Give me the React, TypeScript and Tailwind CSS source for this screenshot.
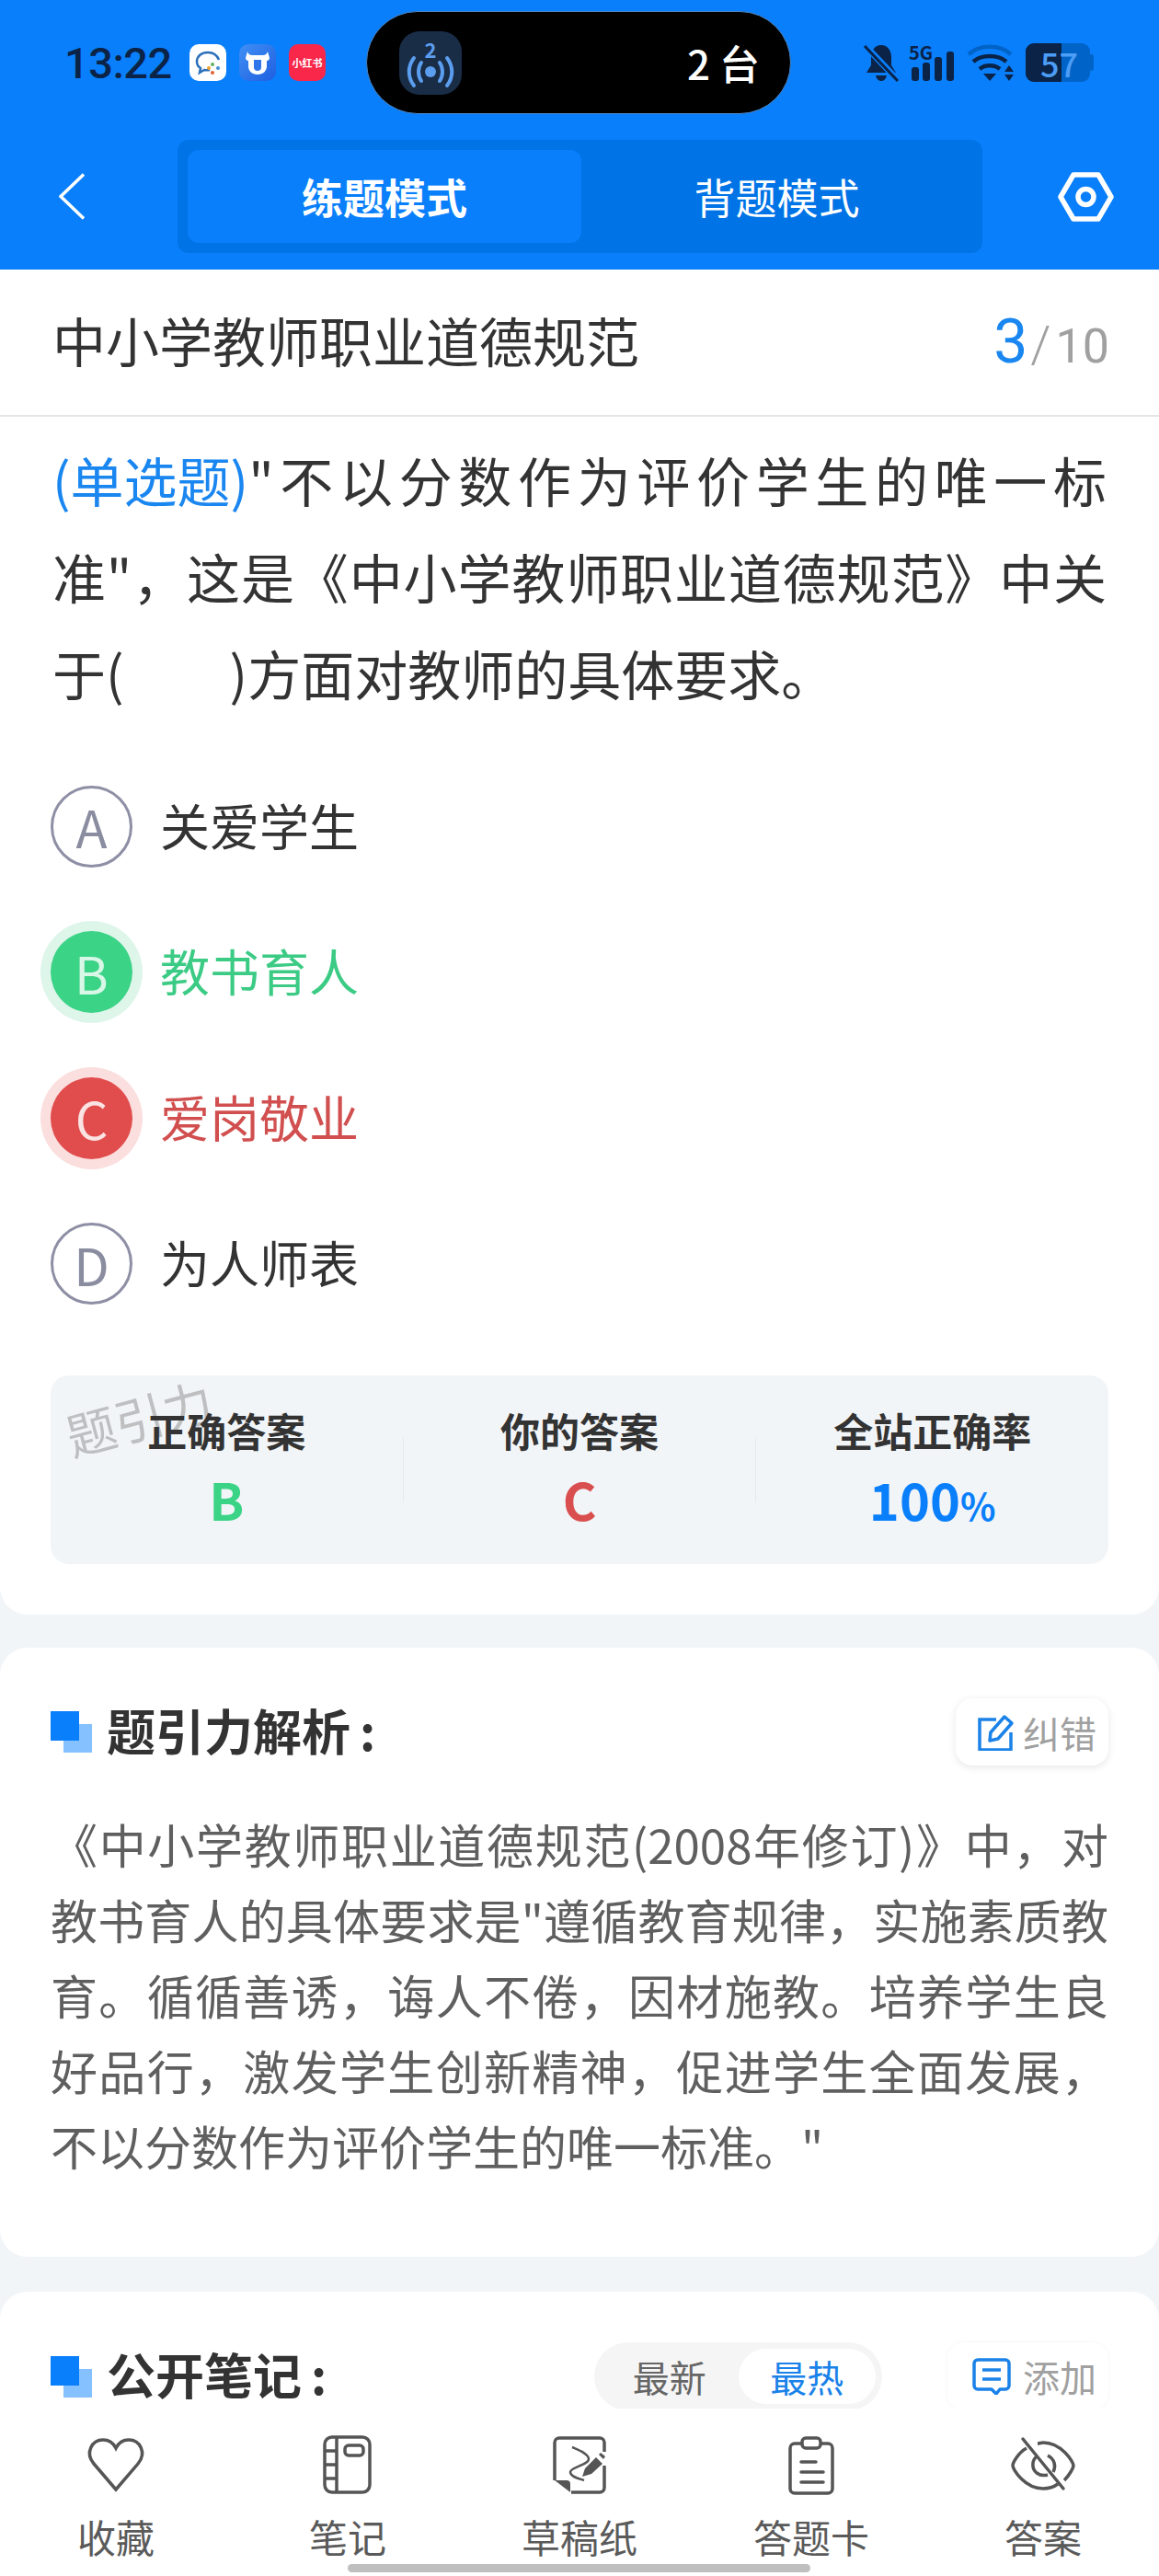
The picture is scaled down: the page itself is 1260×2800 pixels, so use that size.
const font = "font-['Noto_Sans_CJK_SC','Noto_Sans',sans-serif]";

function StatusBar() {
  return (
    <div className="flex h-[112px] mt-[12px] items-center">
      <span className="ml-[70px] w-[116px] text-[47px] leading-none font-medium tracking-[-0.5px] text-[#0a2347] font-['Roboto',sans-serif]">13:22</span>
      <div className="ml-[20px] flex gap-[14px]">
        <div className="w-[40px] h-[40px] rounded-[10px] bg-white">
          <svg viewBox="0 0 40 40" className="w-full h-full" fill="none">
            <path d="M20 9c-7 0-12 4-12 10 0 3 1.500 5.500 4 7l-1 5 5-3c2 .4 4 .4 6 0" stroke="#2a6fb8" strokeWidth="2.500" />
            <path d="M20 9c6 0 10 3 12 8" stroke="#2a6fb8" strokeWidth="2.500" />
            <circle cx="25" cy="22" r="2" fill="#63b060" />
            <circle cx="31" cy="26" r="2" fill="#3f8fd8" />
            <circle cx="25" cy="31" r="2" fill="#e06030" />
            <circle cx="21" cy="26" r="2" fill="#f0a030" />
          </svg>
        </div>
        <div className="w-[40px] h-[40px] rounded-[10px] bg-[linear-gradient(135deg,#3f8ff5,#1f5fe0)]">
          <svg viewBox="0 0 40 40" className="w-full h-full" fill="none">
            <path d="M9 8c1 3 3 4 5 4h12c2 0 4-1 5-4l2 7c0 1-1 3-3 3v6c0 5-4 9-10 9s-10-4-10-9v-6c-2 0-3-2-3-3z" fill="#fff" />
            <path d="M16 17h8v8c0 2.500-1.500 4-4 4s-4-1.500-4-4z" fill="#2f76ea" />
          </svg>
        </div>
        <div className="w-[40px] h-[40px] rounded-[10px] bg-[#f9274a] flex items-center justify-center">
          <span className="text-[11px] leading-none font-bold text-white whitespace-nowrap">小红书</span>
        </div>
      </div>
      <div className="ml-[44px] w-[462px] h-[112px] rounded-[56px] bg-black border border-[#4d86c4] flex items-center pl-[35px]">
        <div className="relative w-[68px] h-[69px] rounded-[22px] bg-[#1a2d47]">
          <span className="absolute top-[8px] left-0 right-0 text-center text-[22px] leading-none font-bold text-[#5b9dee]">2</span>
          <svg viewBox="0 0 68 69" className="w-full h-full" fill="none" stroke="#5b9dee" strokeWidth="4" strokeLinecap="round">
            <circle cx="34" cy="44" r="6" fill="#5b9dee" stroke="none" />
            <path d="M24 34c-4 6-4 14 0 20M44 34c4 6 4 14 0 20" />
            <path d="M16 29c-7 9-7 21 0 30M52 29c7 9 7 21 0 30" />
          </svg>
        </div>
        <span className="ml-[245px] text-[44px] leading-none font-medium text-white whitespace-nowrap">2 台</span>
      </div>
      <div className="ml-[78px] flex items-center">
        <svg viewBox="0 0 40 42" className="w-[40px] h-[42px]">
          <path d="M20 2c7 0 11 6 11 13v9l5 8H4l5-8v-9C9 8 13 2 20 2zM14 35h12c-1 4-3 6-6 6s-5-2-6-6z" fill="#0a2347" />
          <path d="M2 2l36 38" stroke="#0a7ffb" strokeWidth="7" />
          <path d="M2 3l36 38" stroke="#0a2347" strokeWidth="3" />
        </svg>
        <div className="ml-[10px] relative w-[50px] h-[42px]">
          <span className="absolute left-0 top-0 text-[20px] leading-[20px] font-bold text-[#0a2347]">5G</span>
          <svg viewBox="0 0 50 42" className="w-full h-full" fill="#0a2347">
            <rect x="3" y="26" width="8" height="15" rx="3" />
            <rect x="15" y="21" width="8" height="20" rx="3" />
            <rect x="28" y="15" width="8" height="26" rx="3" />
            <rect x="41" y="9" width="8" height="32" rx="3" />
          </svg>
        </div>
        <svg viewBox="0 0 52 42" className="ml-[13px] w-[52px] h-[42px]" fill="none">
          <path d="M2 12c12-11 34-11 46 0" stroke="#0063c8" strokeWidth="4.500" />
          <path d="M7 20c9-8 27-8 36 0" stroke="#0a2347" strokeWidth="4.500" />
          <path d="M14 28c6-5 16-5 22 0" stroke="#0a2347" strokeWidth="4.500" />
          <path d="M18 33h14l-7 8zM46 24l5 7H41zM46 41l-5-7h10z" fill="#0a2347" />
        </svg>
        <div className="ml-[12px] relative w-[74px] h-[42px]">
          <div className="flex w-[70px] h-[42px] rounded-[9px] overflow-hidden bg-[#0063c8]">
            <div className="w-[39px] bg-[#0a2347]" />
          </div>
          <div className="absolute right-0 top-[12px] w-[4px] h-[18px] rounded-r-[3px] bg-[#0063c8]" />
          <span className="absolute left-[16px] top-[3px] text-[36px] leading-[36px] font-medium text-[#4c9df5]">57</span>
        </div>
      </div>
    </div>
  );
}

function NavBar() {
  return (
    <div className="flex h-[123px] mt-[28px] mb-[18px] items-center pl-[64px]">
      <svg viewBox="0 0 28 51" className="w-[28px] h-[51px]" fill="none" stroke="#fff" strokeWidth="3.500">
        <path d="M27 1.500L2 25.500l25 24" />
      </svg>
      <div className="ml-[101px] w-[875px] h-[123px] rounded-[12px] bg-[#0073e6] p-[11px] flex">
        <div className="w-[428px] rounded-[12px] bg-[#0a7ffb] flex items-center justify-center text-[45px] leading-none font-bold text-white">练题模式</div>
        <div className="flex-1 flex items-center justify-center text-[45px] leading-none text-white">背题模式</div>
      </div>
      <svg viewBox="0 0 61 54" className="ml-[82px] w-[61px] h-[54px]" fill="none" stroke="#fff" strokeWidth="5.500">
        <path d="M17 3h27l14 24-14 24H17L3 27z" strokeLinejoin="round" />
        <circle cx="30.500" cy="27" r="8.500" />
      </svg>
    </div>
  );
}

function Option({ letter, text, state }: { letter: string; text: string; state?: "right" | "wrong" }) {
  return (
    <div className="flex h-[158.500px] items-center pl-[55px]">
      {state === "right" && (
        <div className="w-[89px] h-[89px] rounded-full bg-[#3bd386] ring-[11px] ring-[#def5ea] flex items-center justify-center text-[56px] text-[#d8f7e7]">{letter}</div>
      )}
      {state === "wrong" && (
        <div className="w-[89px] h-[89px] rounded-full bg-[#e14d4d] ring-[11px] ring-[#fbdede] flex items-center justify-center text-[56px] text-[#fbe3e3]">{letter}</div>
      )}
      {!state && (
        <div className="w-[89px] h-[89px] rounded-full border-[3px] border-[#8e8fa5] flex items-center justify-center text-[56px] text-[#8a8ca0]">{letter}</div>
      )}
      <span className={`ml-[30px] mb-[3px] text-[54px] leading-none ${state === "right" ? "text-[#3ccb85]" : state === "wrong" ? "text-[#d14f4f]" : "text-[#333]"}`}>{text}</span>
    </div>
  );
}

function Stat({ label, children }: { label: string; children: React.ReactNode }) {
  return (
    <div className="flex-1 flex flex-col items-center pt-[34px]">
      <span className="relative text-[43px] leading-[50px] font-bold text-[#333]">{label}</span>
      <div className="mt-[20px] h-[60px] flex items-baseline justify-center font-bold text-[56px] leading-[60px]">{children}</div>
    </div>
  );
}

function Heading({ title }: { title: string }) {
  return (
    <div className="flex items-center">
      <div className="relative w-[45px] h-[45px]">
        <div className="absolute left-[14px] top-[14px] w-[31px] h-[31px] bg-[#85c0ff]" />
        <div className="absolute left-0 top-0 w-[31px] h-[32px] bg-[#0a7ffb]" />
      </div>
      <span className="ml-[16px] mb-[6px] text-[53px] leading-[60px] font-bold text-[#333]">
        {title}
        <span className="ml-[10px]">:</span>
      </span>
    </div>
  );
}

const analysis = [
  "《中小学教师职业道德规范(2008年修订)》中，对",
  "教书育人的具体要求是\"遵循教育规律，实施素质教",
  "育。循循善诱，诲人不倦，因材施教。培养学生良",
  "好品行，激发学生创新精神，促进学生全面发展，",
];

function BottomBar() {
  const items = [
    {
      label: "收藏",
      icon: <path d="M35 59L11 31C1 19 9 5 21 5c6 0 11 3 14 9 3-6 8-9 14-9 12 0 20 14 10 26z" />,
    },
    {
      label: "笔记",
      icon: (
        <>
          <rect x="10" y="2" width="49" height="60" rx="8" />
          <path d="M23 2v60M10 17h13M10 32h13M10 47h13" />
          <rect x="32" y="11" width="20" height="11" rx="4" />
        </>
      ),
    },
    {
      label: "草稿纸",
      icon: (
        <>
          <path d="M62 18V8a5 5 0 0 0-5-5H13a5 5 0 0 0-5 5v41M62 33v24a5 5 0 0 1-5 5H26" />
          <path d="M27 13c7 3 18 7 18 13 0 6-20 9-20 14 0 5 9 7 15 9" strokeWidth="2.500" />
          <path d="M8 49h13a4 4 0 0 1 4 4v9z" fill="#555" stroke="none" />
          <path d="M38 45l3-9 12-12 7 7-12 11zM56 21l2-2 5 4-2 3z" fill="#555" stroke="none" />
        </>
      ),
    },
    {
      label: "答题卡",
      icon: (
        <>
          <path d="M24 9h-7a5 5 0 0 0-5 5v44a5 5 0 0 0 5 5h36a5 5 0 0 0 5-5V14a5 5 0 0 0-5-5h-7" />
          <rect x="25" y="3" width="20" height="11" rx="4" />
          <path d="M24 29h16M24 40h24M24 51h24" strokeLinecap="round" />
        </>
      ),
    },
    {
      label: "答案",
      icon: (
        <>
          <path d="M17 14C8 19 2 30 2 33c0 4 13 25 33 25 7 0 12-2 16-5M29 9c2 0 4-1 6-1 20 0 33 21 33 25 0 2-4 10-10 16" />
          <path d="M28 23c-5 4-6 13 0 18 4 3 8 3 12 2M46 40c3-6 2-14-6-18" />
          <path d="M13 4l44 54" strokeLinecap="round" />
        </>
      ),
    },
  ];
  return (
    <div className="relative h-[182px] shrink-0 bg-white grid grid-cols-5">
      {items.map((it) => (
        <div key={it.label} className="flex flex-col items-center pt-[29px]">
          <svg viewBox="0 0 70 65" className="w-[70px] h-[65px]" fill="none" stroke="#555" strokeWidth="3.500">
            {it.icon}
          </svg>
          <span className="mt-[20px] text-[42px] leading-[50px] text-[#5a5a5a]">{it.label}</span>
        </div>
      ))}
      <div className="absolute left-[378px] top-[169px] w-[503px] h-[9px] rounded-full bg-[#bfbfbf]" />
    </div>
  );
}

export default function App() {
  return (
    <div className={`${font} w-[1260px] h-[2800px] overflow-hidden flex flex-col bg-[#f2f5f8]`}>
      <div className="shrink-0 bg-[#0a7ffb]">
        <StatusBar />
        <NavBar />
      </div>

      <div className="flex-1 overflow-hidden">
        {/* question card */}
        <div className="bg-white rounded-b-[30px] h-[1462px]">
          <div className="h-[160px] border-b-2 border-[#e5e5e5] flex items-center justify-between pl-[57px] pr-[54px]">
            <span className="mb-[6px] text-[58px] leading-none text-[#333]">中小学教师职业道德规范</span>
            <div className="flex items-baseline font-['Roboto',sans-serif]">
              <span className="text-[66px] leading-none text-[#1a86f0]">3</span>
              <span className="ml-[3px] text-[56px] leading-none font-light text-[#a0a0a0]">/</span>
              <span className="ml-[5px] text-[52px] leading-none text-[#a0a0a0]">10</span>
            </div>
          </div>
          <div className="mt-[16px] px-[57px] text-[58px] leading-[105px] text-[#333]">
            <div className="[text-align:justify] [text-align-last:justify]">
              <span className="inline-block text-[#1a86f0]">(单选题)</span>"不以分数作为评价学生的唯一标
            </div>
            <div className="[text-align:justify] [text-align-last:justify]">准"，这是《中小学教师职业道德规范》中关</div>
            <div>
              于(<span className="inline-block w-[115px]" />)方面对教师的具体要求。
            </div>
          </div>
          <div className="mt-[35px]">
            <Option letter="A" text="关爱学生" />
            <Option letter="B" text="教书育人" state="right" />
            <Option letter="C" text="爱岗敬业" state="wrong" />
            <Option letter="D" text="为人师表" />
          </div>
          <div className="relative mt-[42px] mx-[55px] h-[205px] rounded-[20px] bg-[#f2f5f8] flex">
            <span className="absolute left-[15px] top-[18px] text-[54px] leading-none text-[#a8a8a8]/70 -rotate-[15deg]">题引力</span>
            <Stat label="正确答案">
              <span className="text-[#3bd386]">B</span>
            </Stat>
            <div className="w-px h-[71px] mt-[67px] bg-[#e6e9ed]" />
            <Stat label="你的答案">
              <span className="text-[#d94f4f]">C</span>
            </Stat>
            <div className="w-px h-[71px] mt-[67px] bg-[#e6e9ed]" />
            <Stat label="全站正确率">
              <span className="text-[#0a7ffb]">100</span>
              <span className="text-[40px] text-[#0a7ffb]">%</span>
            </Stat>
          </div>
        </div>

        {/* analysis card */}
        <div className="mt-[36px] bg-white rounded-[30px] h-[662px] px-[55px] pt-[55px]">
          <div className="flex items-center justify-between h-[73px]">
            <Heading title="题引力解析" />
            <div className="w-[166px] h-[73px] rounded-[18px] bg-white shadow-[0_2px_8px_rgba(0,0,0,0.1)] flex items-center pl-[24px]">
              <svg viewBox="0 0 40 40" className="w-[40px] h-[40px]" fill="none" stroke="#1a82e8" strokeWidth="3.500">
                <path d="M20 6H2v33h34V20" />
                <path d="M14 20L29 3l8 7-15 17-9 2z" strokeLinejoin="round" />
              </svg>
              <span className="ml-[9px] text-[40px] leading-none text-[#a0a0a0]">纠错</span>
            </div>
          </div>
          <div className="mt-[44px] text-[51px] leading-[82px] text-[#5f5f5f]">
            {analysis.map((line) => (
              <div key={line} className="[text-align:justify] [text-align-last:justify]">{line}</div>
            ))}
            <div>不以分数作为评价学生的唯一标准。"</div>
          </div>
        </div>

        {/* public notes, cut off by the bottom bar */}
        <div className="mt-[38px] bg-white rounded-t-[30px] h-[200px] px-[55px] pt-[55px]">
          <div className="flex items-center h-[74px]">
            <Heading title="公开笔记" />
            <div className="ml-auto w-[313px] h-[74px] rounded-full bg-[#f5f5f5] p-[7px] flex items-center">
              <span className="w-[150px] text-center text-[40px] leading-none text-[#666]">最新</span>
              <div className="w-[150px] h-[60px] rounded-full bg-white flex items-center justify-center text-[40px] leading-none text-[#1a82e8]">最热</div>
            </div>
            <div className="ml-[71px] w-[175px] h-[74px] rounded-[18px] bg-white shadow-[0_0_4px_rgba(0,0,0,0.05)] flex items-center pl-[27px]">
              <svg viewBox="0 0 42 40" className="w-[42px] h-[40px]" fill="none" stroke="#1a82e8" strokeWidth="3.500">
                <path d="M6 2h30a4 4 0 0 1 4 4v24a4 4 0 0 1-4 4h-6l-4 5-5-5H6a4 4 0 0 1-4-4V6a4 4 0 0 1 4-4z" strokeLinejoin="round" />
                <path d="M11 13h20M11 23h20" />
              </svg>
              <span className="ml-[13px] text-[40px] leading-none text-[#a0a0a0]">添加</span>
            </div>
          </div>
        </div>
      </div>

      <BottomBar />
    </div>
  );
}
